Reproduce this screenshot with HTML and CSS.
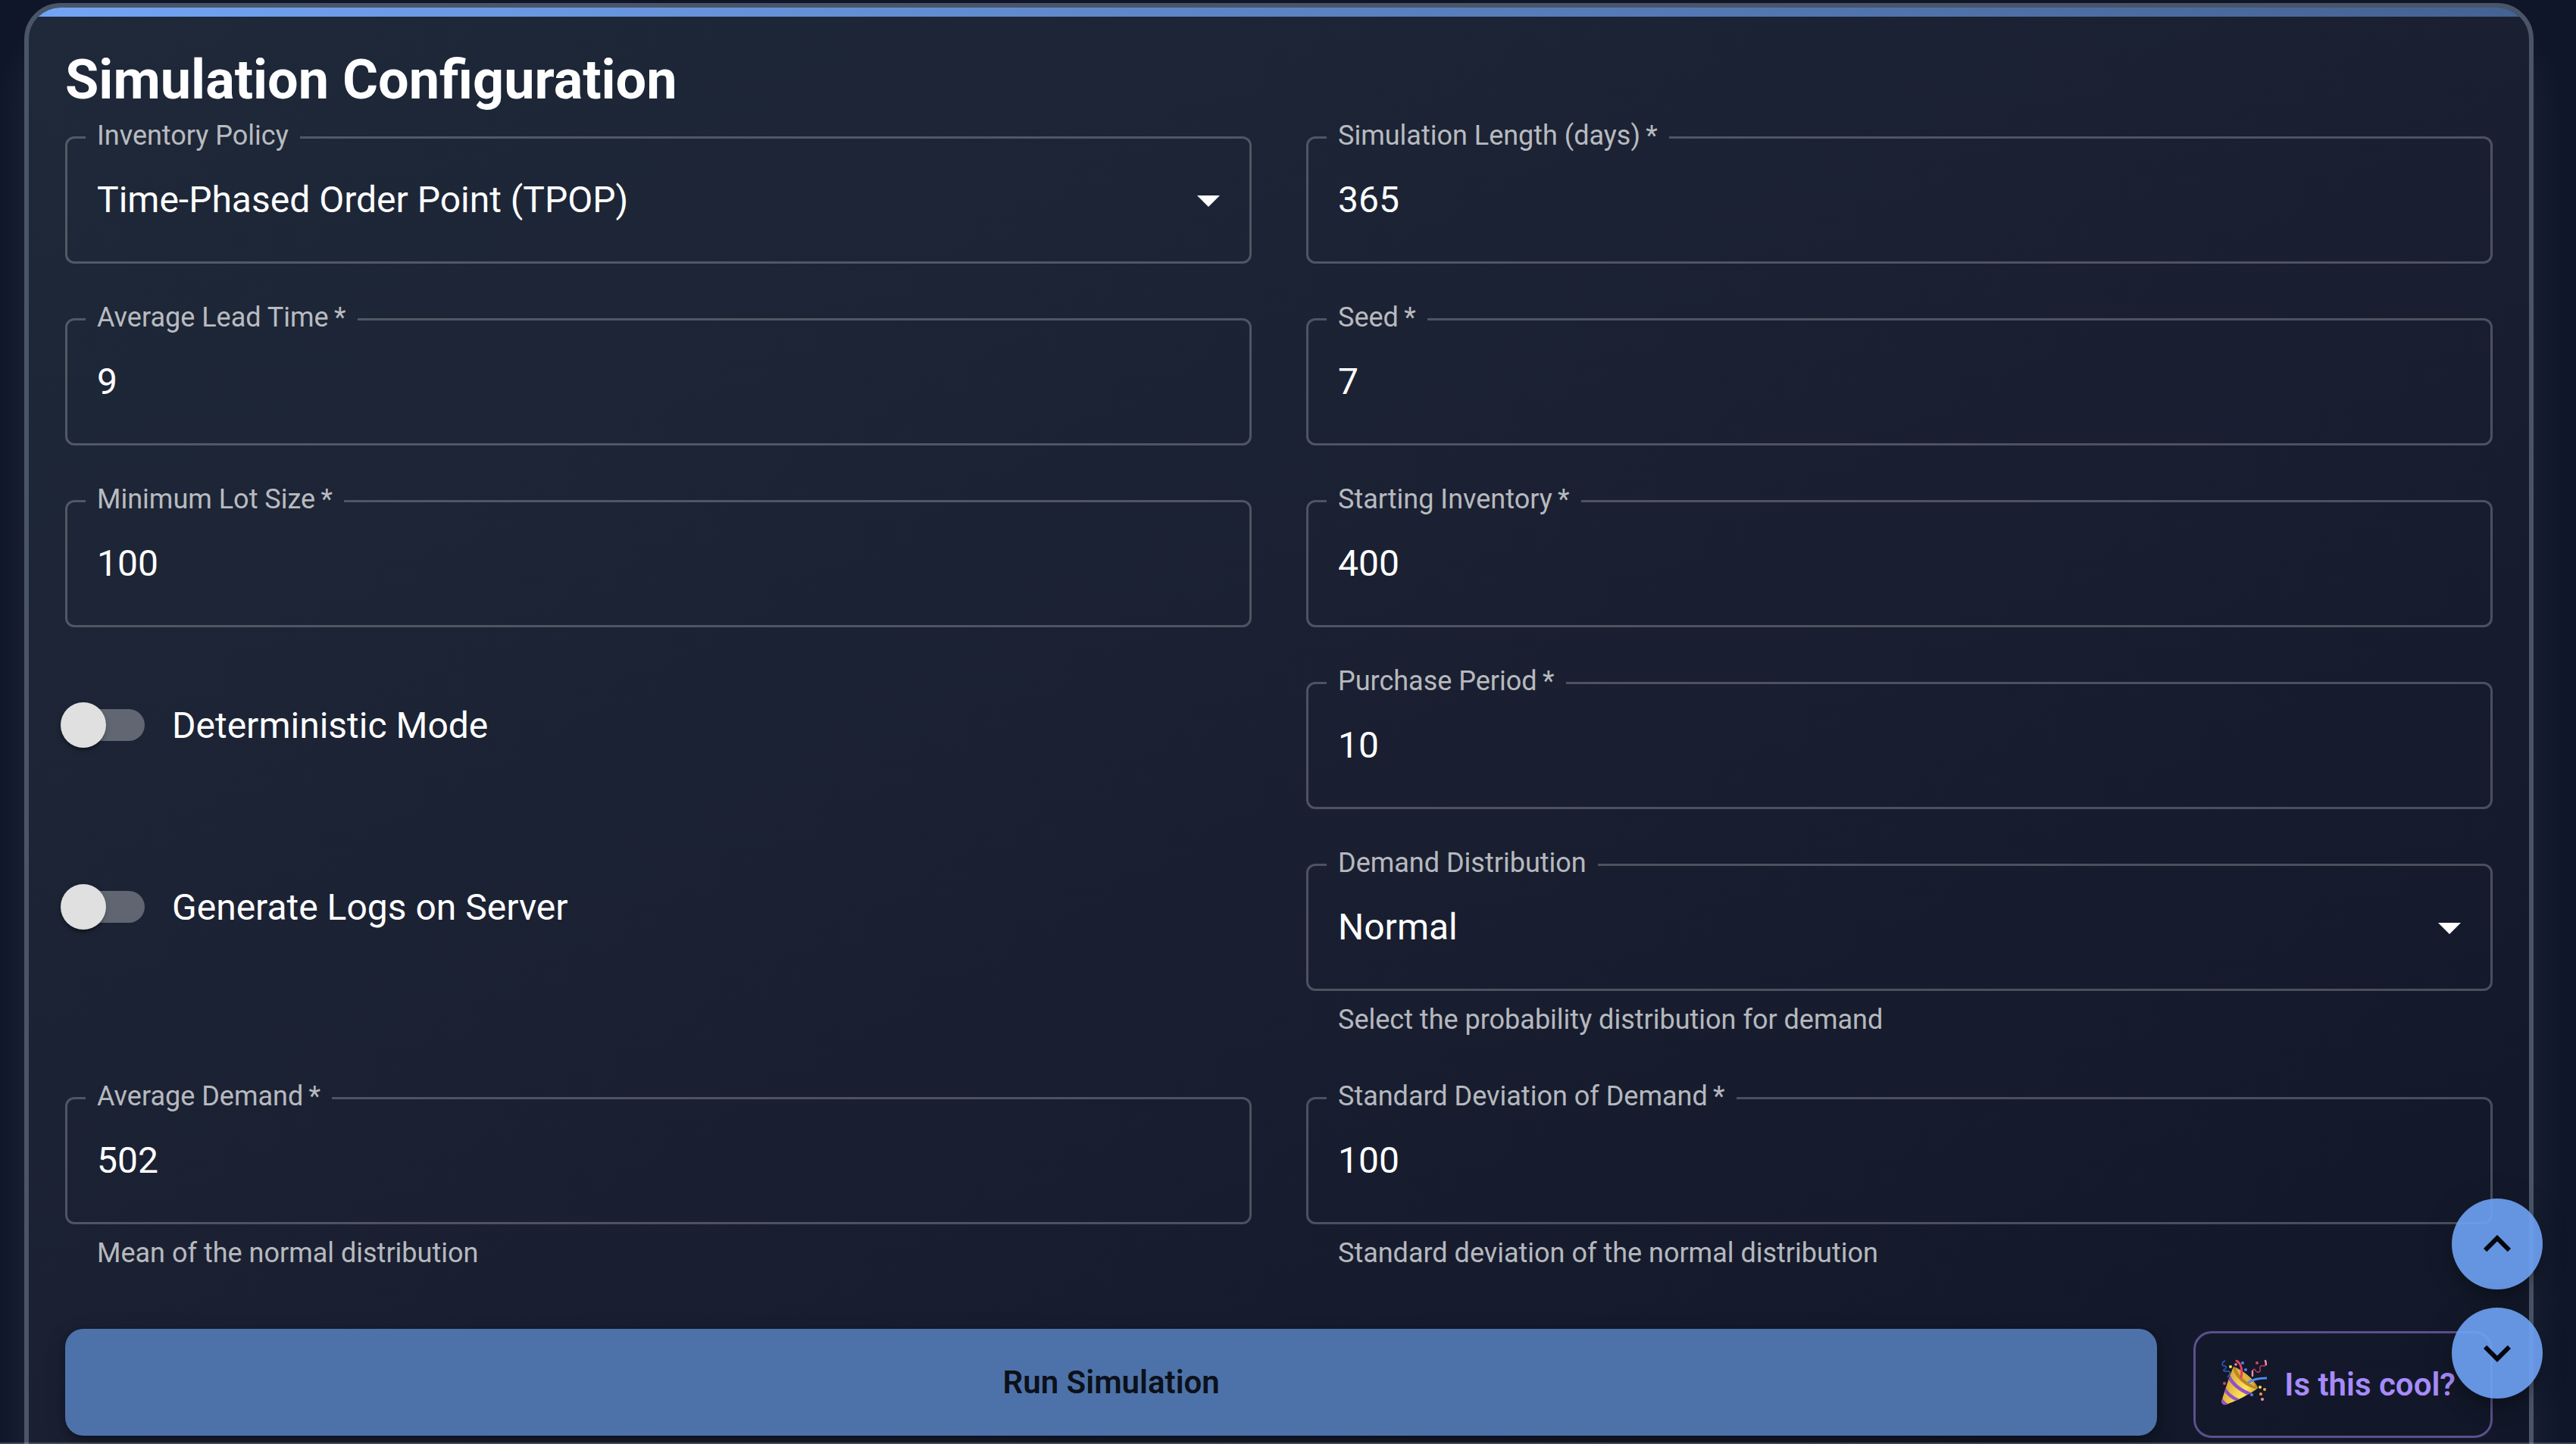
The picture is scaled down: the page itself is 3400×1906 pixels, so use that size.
FILE: index.html
```html
<!DOCTYPE html>
<html lang="en">
<head>
<meta charset="utf-8">
<title>Simulation Configuration</title>
<link rel="stylesheet" href="styles.css">
</head>
<body>
<main class="page">
  <section class="panel">
    <div class="panel-accent"></div>
    <form class="panel-body">
      <h1 class="panel-title">Simulation Configuration</h1>
      <div class="form-grid">
        <div class="field">
          <fieldset class="outline">
            <legend class="notch"><label for="policy">Inventory Policy</label></legend>
            <div class="select-wrap">
              <select class="control" id="policy"><option>Time-Phased Order Point (TPOP)</option></select>
              <svg class="icon arrow" viewBox="0 0 24 24" aria-hidden="true"><path d="M7 10l5 5 5-5z"/></svg>
            </div>
          </fieldset>
        </div>
        <div class="field">
          <fieldset class="outline">
            <legend class="notch"><label for="length">Simulation Length (days)&thinsp;*</label></legend>
            <input class="control" id="length" type="text" inputmode="numeric" value="365">
          </fieldset>
        </div>

        <div class="field">
          <fieldset class="outline">
            <legend class="notch"><label for="lead">Average Lead Time&thinsp;*</label></legend>
            <input class="control" id="lead" type="text" inputmode="numeric" value="9">
          </fieldset>
        </div>
        <div class="field">
          <fieldset class="outline">
            <legend class="notch"><label for="seed">Seed&thinsp;*</label></legend>
            <input class="control" id="seed" type="text" inputmode="numeric" value="7">
          </fieldset>
        </div>

        <div class="field">
          <fieldset class="outline">
            <legend class="notch"><label for="lot">Minimum Lot Size&thinsp;*</label></legend>
            <input class="control" id="lot" type="text" inputmode="numeric" value="100">
          </fieldset>
        </div>
        <div class="field">
          <fieldset class="outline">
            <legend class="notch"><label for="start">Starting Inventory&thinsp;*</label></legend>
            <input class="control" id="start" type="text" inputmode="numeric" value="400">
          </fieldset>
        </div>

        <label class="switch-row"><input class="switch" type="checkbox">Deterministic Mode</label>
        <div class="field">
          <fieldset class="outline">
            <legend class="notch"><label for="period">Purchase Period&thinsp;*</label></legend>
            <input class="control" id="period" type="text" inputmode="numeric" value="10">
          </fieldset>
        </div>

        <label class="switch-row"><input class="switch" type="checkbox">Generate Logs on Server</label>
        <div class="field">
          <fieldset class="outline">
            <legend class="notch"><label for="dist">Demand Distribution</label></legend>
            <div class="select-wrap">
              <select class="control" id="dist"><option>Normal</option></select>
              <svg class="icon arrow" viewBox="0 0 24 24" aria-hidden="true"><path d="M7 10l5 5 5-5z"/></svg>
            </div>
          </fieldset>
          <p class="helper">Select the probability distribution for demand</p>
        </div>

        <div class="field">
          <fieldset class="outline">
            <legend class="notch"><label for="avg">Average Demand&thinsp;*</label></legend>
            <input class="control" id="avg" type="text" inputmode="numeric" value="502">
          </fieldset>
          <p class="helper">Mean of the normal distribution</p>
        </div>
        <div class="field">
          <fieldset class="outline">
            <legend class="notch"><label for="std">Standard Deviation of Demand&thinsp;*</label></legend>
            <input class="control" id="std" type="text" inputmode="numeric" value="100">
          </fieldset>
          <p class="helper">Standard deviation of the normal distribution</p>
        </div>
      </div>

      <div class="actions">
        <button class="btn btn-primary" type="button">Run Simulation</button>
        <button class="btn btn-cool" type="button">
          <svg class="party" viewBox="0 0 60 60" aria-hidden="true">
            <defs>
              <linearGradient id="cone" x1="0" y1="0.3" x2="1" y2="0.8">
                <stop offset="0" stop-color="#c99a28"/><stop offset="0.35" stop-color="#e9c344"/>
                <stop offset="0.65" stop-color="#fde65a"/><stop offset="1" stop-color="#c9912a"/>
              </linearGradient>
              <clipPath id="coneClip"><path d="M16 9 C18 20 36 34 48 37 C42 43 20 54 6 59 Q1 60 0 55 C4 42 11 20 16 9z"/></clipPath>
            </defs>
            <path d="M16 9 C26 12 44 26 48 37 C42 43 20 54 6 59 Q1 60 0 55 C4 42 11 20 16 9z" fill="url(#cone)"/>
            <g clip-path="url(#coneClip)" fill="none" stroke="#9450cc" stroke-width="4.5">
              <path d="M10 22 C14 31 24 40 38 45"/>
              <path d="M4 38 C8 45 14 50 22 53"/>
              <path d="M-1 51 C1 55 4 58 8 60"/>
            </g>
            <path d="M16 10 C20 8 46 30 48 37 C45 40 34 35 27 29 C20 23 15 15 16 10z" fill="#bd8426"/>
            <path d="M19 11 C27 14 41 27 45 35 C36 32 23 22 19 11z" fill="#e2b243"/>
            <path d="M20 1 C26 5 28 13 26 23" fill="none" stroke="#e0405f" stroke-width="3" stroke-linecap="round"/>
            <path d="M35 30 C42 25 50 24 60 24" fill="none" stroke="#4f8cec" stroke-width="2.8"/>
            <path d="M5 1 C-1 4 1 8 4 8 C8 8 6 12 3 13 C2 17 9 13 11 16 C13 19 9 20 8 23" fill="none" stroke="#315cc0" stroke-width="1.5"/>
            <path d="M41 20 C40 13 43 10 45 14 C47 18 53 16 51 12 C50 8 53 7 56 8 C60 7 60 4 58 1" fill="none" stroke="#c93d62" stroke-width="1.4"/>
            <path d="M41 21 L41 15 M59 6 L58 1" stroke="#f291ac" stroke-width="2.4" stroke-linecap="round"/>
            <g fill="#f6e74c"><circle cx="12" cy="9" r="2"/><circle cx="51" cy="36" r="2"/></g>
            <g fill="#4b86ee"><circle cx="28" cy="4" r="2"/><circle cx="32" cy="13" r="2"/><circle cx="40" cy="46" r="2"/></g>
            <g fill="#f2a33e"><circle cx="57" cy="39" r="2"/><circle cx="52" cy="45" r="2"/></g>
            <g fill="#d0446b"><circle cx="47" cy="4" r="2"/><circle cx="4" cy="31" r="2"/></g>
            <g fill="#f08ab5"><circle cx="19" cy="6" r="1.8"/><circle cx="54" cy="52" r="2.1"/></g>
          </svg>
          <span>Is this cool?</span>
        </button>
      </div>
    </form>
  </section>
</main>

<nav class="scroll-nav" aria-label="Scroll">
  <button class="fab" type="button" aria-label="Scroll up"><svg class="icon" viewBox="0 0 24 24"><path d="M7.41 15.41 12 10.83l4.59 4.58L18 14l-6-6-6 6z"/></svg></button>
  <button class="fab" type="button" aria-label="Scroll down"><svg class="icon" viewBox="0 0 24 24"><path d="M7.41 8.59 12 13.17l4.59-4.58L18 10l-6 6-6-6z"/></svg></button>
</nav>
<div class="window-edge"></div>
</body>
</html>
```
FILE: styles.css
```css
* { box-sizing: border-box; }

body {
  margin: 0;
  height: 100vh;
  overflow: hidden;
  background: #0f1629;
  color: #fff;
  font-family: Roboto, "Liberation Sans", sans-serif;
  font-size: 48px;
}

.page { padding: 4px 56px 0 32px; }

.panel {
  border: 6px solid #4a5568;
  border-radius: 48px;
  overflow: hidden;
  background: linear-gradient(150deg, #1f2939 0%, #1a2032 50%, #111728 100%);
  box-shadow: 0 60px 60px rgba(255, 255, 255, 0.07);
}

.panel-accent {
  height: 12px;
  background: linear-gradient(90deg, #73a5f5, #446292);
}

.panel-body { padding: 42px 48px 48px; }

.panel-title {
  margin: 0 0 10px;
  font-size: 72px;
  font-weight: 700;
  line-height: 84px;
}

.form-grid {
  display: grid;
  grid-template-columns: 1fr 1fr;
  gap: 50px 72px;
}

.field { min-width: 0; }

/* The legend cuts the notch in the outline and is centred on its top edge */
.outline {
  min-width: 0;
  margin: 0;
  padding: 0 24px 22px;
  border: 3px solid rgba(255, 255, 255, 0.23);
  border-radius: 12px;
}

.notch {
  padding: 0 15px 5px;
  color: rgba(255, 255, 255, 0.7);
  font-size: 36px;
  line-height: 42px;
}

.control {
  display: block;
  width: 100%;
  height: 118px;
  margin: 0;
  padding: 0 15px 2px;
  border: 0;
  outline: 0;
  appearance: none;
  background: transparent;
  color: #fff;
  font: inherit;
}

.select-wrap { display: grid; align-items: center; }
.select-wrap > * { grid-area: 1 / 1; }

.icon { width: 72px; height: 72px; fill: currentColor; }
.arrow { justify-self: end; margin-right: -6px; pointer-events: none; }

.helper {
  margin: 9px 42px 0;
  color: rgba(255, 255, 255, 0.7);
  font-size: 36px;
  line-height: 59px;
}

.switch-row {
  display: flex;
  align-items: center;
  align-self: start;
  justify-self: start;
  height: 114px;
  margin: 22px 0 0 -33px;
}

.switch {
  position: relative;
  appearance: none;
  width: 102px;
  height: 42px;
  margin: 0 36px;
  border-radius: 21px;
  background: rgba(255, 255, 255, 0.3);
}

.switch::before {
  content: "";
  position: absolute;
  top: -9px;
  left: -9px;
  width: 60px;
  height: 60px;
  border-radius: 50%;
  background: #e0e0e0;
  box-shadow: 0 6px 3px -3px rgba(0, 0, 0, 0.2), 0 3px 3px rgba(0, 0, 0, 0.14), 0 3px 9px rgba(0, 0, 0, 0.12);
}

.actions {
  display: flex;
  gap: 48px;
  height: 144px;
  margin-top: 70px;
}

.btn {
  height: 141px;
  border: 0;
  border-radius: 24px;
  font: 600 42px Roboto, "Liberation Sans", sans-serif;
}

.btn-primary {
  flex: 1;
  align-self: flex-start;
  background: #4d72a9;
  color: rgba(0, 0, 0, 0.87);
  box-shadow: 0 6px 12px -3px rgba(0, 0, 0, 0.3), 0 6px 24px rgba(0, 0, 0, 0.25);
}

.btn-cool {
  display: flex;
  align-items: center;
  align-self: flex-end;
  gap: 23px;
  padding: 0 46px 0 34px;
  border: 3px solid #5c508d;
  background: transparent;
  color: #a78bfa;
}

.party { width: 60px; height: 60px; margin-bottom: 6px; }

.scroll-nav {
  position: fixed;
  right: 44px;
  bottom: 60px;
  display: grid;
  gap: 24px;
}

.fab {
  display: grid;
  place-items: center;
  width: 120px;
  height: 120px;
  padding: 0;
  border: 0;
  border-radius: 50%;
  background: #6fa2f4;
  color: rgba(0, 0, 0, 0.97);
  opacity: 0.9;
  box-shadow: 0 9px 15px -3px rgba(0, 0, 0, 0.2), 0 18px 30px rgba(0, 0, 0, 0.14), 0 3px 54px rgba(0, 0, 0, 0.12);
}

.window-edge {
  position: fixed;
  inset: auto 0 0;
  height: 2px;
  background: rgba(255, 255, 255, 0.2);
}
```
